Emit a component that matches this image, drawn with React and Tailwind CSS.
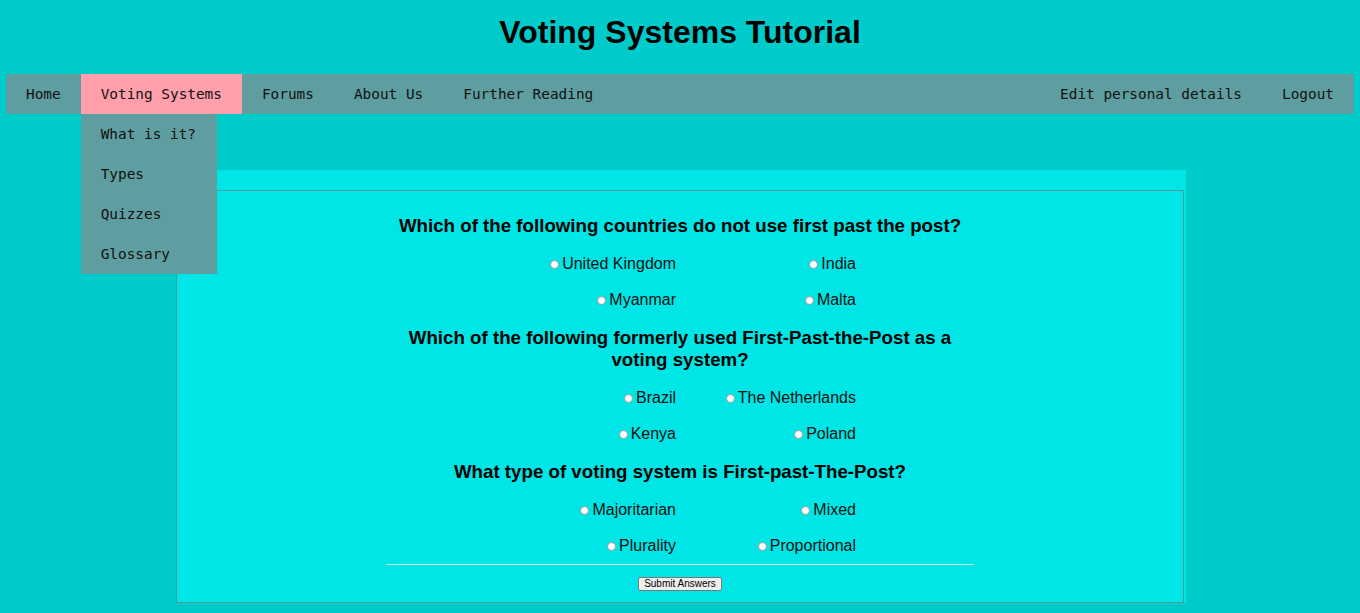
import {useState} from "react";

const questions = [
    {
        name: "q1",
        text: "Which of the following countries do not use first past the post?",
        options: ["United Kingdom", "India", "Myanmar", "Malta"],
    },
    {
        name: "q2",
        text: "Which of the following formerly used First-Past-the-Post as a voting system?",
        options: ["Brazil", "The Netherlands", "Kenya", "Poland"],
    },
    {
        name: "q3",
        text: "What type of voting system is First-past-The-Post?",
        options: ["Majoritarian", "Mixed", "Plurality", "Proportional"],
    },
];

const leftLinks = ["Home", "Voting Systems", "Forums", "About Us", "Further Reading"];
const subLinks = ["What is it?", "Types", "Quizzes", "Glossary"];

export default function App() {
    const [answers, setAnswers] = useState({});

    return (
        <div className="min-h-screen bg-[#00cbcb] text-black font-['Liberation_Sans',Arial,sans-serif]">
            <div className="h-[74px] pt-[14px]">
                <h1 className="text-center text-[32px] leading-[37px] font-bold">Voting Systems Tutorial</h1>
            </div>

            <nav className="mx-[6px] h-[40px] bg-[#5f9ea0] flex justify-between font-['DejaVu_Sans_Mono',monospace] text-[14.4px] text-[#111] whitespace-nowrap">
                <ul className="flex">
                    {leftLinks.map(link => (
                        <li key={link} className={`relative px-[20px] leading-[40px] ${link === "Voting Systems" ? "bg-[#ff9fab]" : ""}`}>
                            {link}
                            {link === "Voting Systems" && (
                                <ul className="absolute left-0 top-[40px] w-[136px] bg-[#5f9ea0] z-10">
                                    {subLinks.map(s => (
                                        <li key={s} className="px-[20px] leading-[40px]">{s}</li>
                                    ))}
                                </ul>
                            )}
                        </li>
                    ))}
                </ul>
                <ul className="flex">
                    <li className="px-[20px] leading-[40px]">Edit personal details</li>
                    <li className="px-[20px] leading-[40px]">Logout</li>
                </ul>
            </nav>

            <div className="ml-[176px] mt-[56px] w-[1010px] bg-[#00e6e6] pt-[20px]">
                <fieldset className="w-[1008px] border border-[#4f9a9a] pt-[24px] pb-[11px]">
                    <div className="w-[586px] mx-auto">
                        {questions.map((q, qi) => (
                            <div key={q.name} className={qi > 0 ? "mt-[9px]" : ""}>
                                <h3 className="text-center text-[18.72px] leading-[22px] font-bold">{q.text}</h3>
                                <div className="mt-[9px] grid grid-cols-[289px_180px]">
                                    {q.options.map(opt => (
                                        <label key={opt} className="h-[36px] flex items-center justify-end text-[16px] text-[#111]">
                                            <input
                                                type="radio"
                                                name={q.name}
                                                value={opt}
                                                checked={answers[q.name] === opt}
                                                onChange={() => setAnswers({...answers, [q.name]: opt})}
                                                className="appearance-none w-[9px] h-[9px] rounded-full bg-white border border-[#9a9a9a] mr-[3px] checked:bg-[#333]"
                                            />
                                            {opt}
                                        </label>
                                    ))}
                                </div>
                            </div>
                        ))}
                        <hr className="border-0 h-[1px] bg-[#d8f4f4]" />
                        <div className="flex justify-center mt-[12px]">
                            <button
                                type="submit"
                                className="h-[14px] px-[5px] text-[10px] leading-[12px] bg-[#efefef] border border-[#767676] rounded-[2px]"
                            >
                                Submit Answers
                            </button>
                        </div>
                    </div>
                </fieldset>
            </div>
        </div>
    );
}
